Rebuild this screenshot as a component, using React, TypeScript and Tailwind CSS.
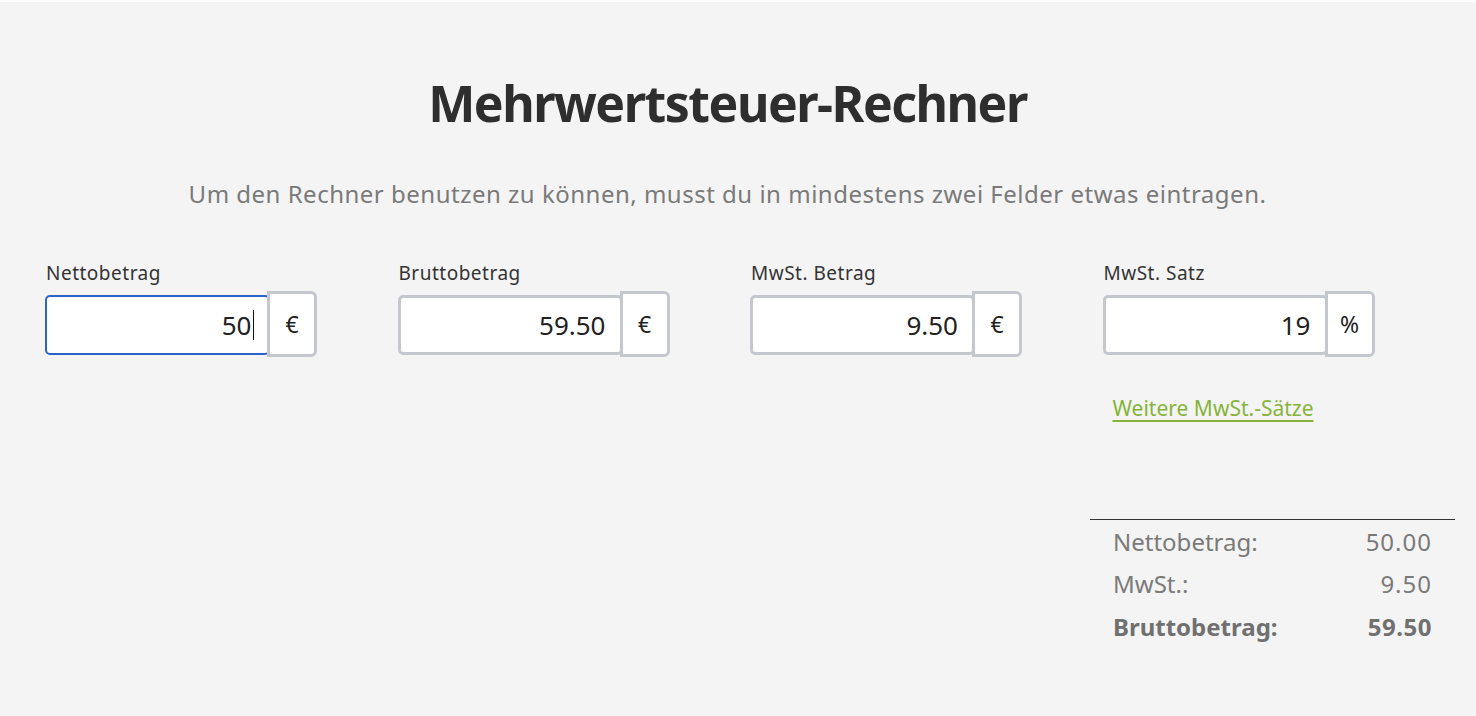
import React from "react";

const font = { fontFamily: '"Noto Sans", "Open Sans", sans-serif' };

function Field({
  label,
  value,
  unit,
  focused,
}: {
  label: string;
  value: string;
  unit: string;
  focused?: boolean;
}) {
  return (
    <div className="flex flex-col">
      <div className="text-[19px] leading-[24px] tracking-[0.5px] text-[#333333] pl-[1px]">{label}</div>
      <div className="mt-[6px] flex items-start">
        <div
          className={
            "mt-[4px] w-[225px] h-[60px] bg-white rounded-[5px] flex items-center justify-end pr-[14px] text-[26px] text-[#222222] " +
            (focused ? "border-2 border-[#2c63c9]" : "border-[3px] border-[#c4c8cc]")
          }
        >
          <span>{value}</span>
          {focused && <span className="ml-[1px] inline-block w-[1.5px] h-[30px] bg-[#111111]" />}
        </div>
        <div className="-ml-[3px] w-[50px] h-[66px] bg-white border-[3px] border-[#c4c8cc] rounded-r-[6px] flex items-center justify-center text-[23px] text-[#222222]">
          {unit}
        </div>
      </div>
    </div>
  );
}

export default function App() {
  return (
    <div className="min-h-screen bg-[#f4f4f4] border-t-2 border-white" style={font}>
      <div className="w-[1455px]">
        <h1 className="pt-[68px] text-center text-[50px] leading-[66px] font-bold text-[#2e2e2e] tracking-[-1.5px]">
          Mehrwertsteuer-Rechner
        </h1>
        <p className="mt-[44px] text-center text-[24px] leading-[28px] tracking-[0.5px] text-[#7a7a7a]">
          Um den Rechner benutzen zu können, musst du in mindestens zwei Felder etwas eintragen.
        </p>
        <div className="ml-[45px] w-[1410px] mt-[53px]">
          <div className="grid grid-cols-4">
            <Field label="Nettobetrag" value="50" unit="€" focused />
            <Field label="Bruttobetrag" value="59.50" unit="€" />
            <Field label="MwSt. Betrag" value="9.50" unit="€" />
            <div className="flex flex-col">
              <Field label="MwSt. Satz" value="19" unit="%" />
              <a
                href="#"
                className="mt-[38px] ml-[10px] text-[21px] leading-[26px] text-[#86b43a] underline decoration-[2px] underline-offset-[4px] self-start"
              >
                Weitere MwSt.-Sätze
              </a>
            </div>
          </div>
          <div className="flex justify-end mt-[98px]">
            <div className="w-[365px] border-t border-[#333333] px-[23px] text-[24px] text-[#7a7a7a]">
              <div className="flex justify-between leading-[43px]">
                <span>Nettobetrag:</span>
                <span className="tracking-[1px]">50.00</span>
              </div>
              <div className="flex justify-between leading-[42px]">
                <span>MwSt.:</span>
                <span className="tracking-[1px]">9.50</span>
              </div>
              <div className="flex justify-between leading-[43px] font-bold text-[#707070]">
                <span>Bruttobetrag:</span>
                <span className="tracking-[0.5px]">59.50</span>
              </div>
            </div>
          </div>
        </div>
      </div>
    </div>
  );
}
